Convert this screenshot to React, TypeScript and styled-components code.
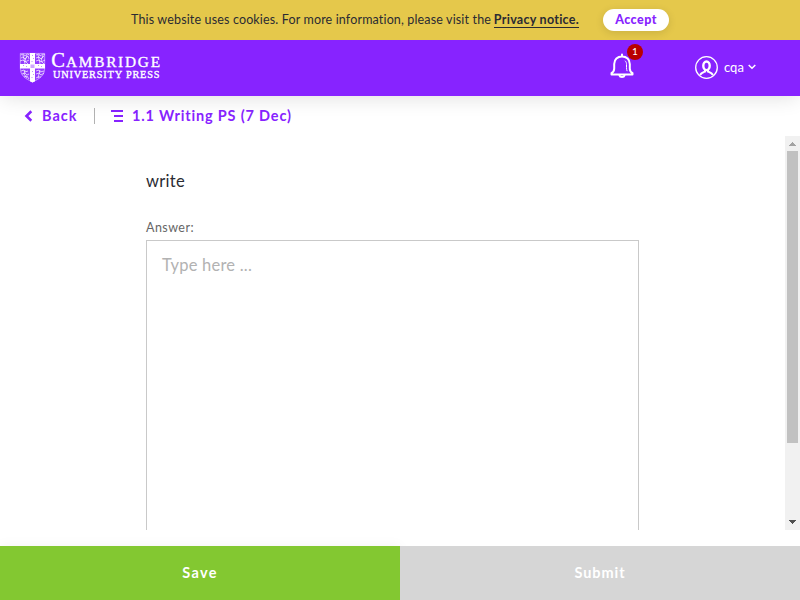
import React from "react";
import styled, { createGlobalStyle } from "styled-components";

const PURPLE = "#8723ff";

const GlobalStyle = createGlobalStyle`
  * { box-sizing: border-box; }
  html, body { margin: 0; padding: 0; }
  body {
    font-family: Lato, "Open Sans", sans-serif;
    color: #2b2b33;
    background: #fff;
    overflow: hidden;
  }
  button { font-family: inherit; border: 0; padding: 0; margin: 0; cursor: pointer; }
`;

const Page = styled.div`
  display: flex;
  flex-direction: column;
  width: 800px;
  height: 600px;
`;

const CookieBar = styled.div`
  flex: none;
  display: flex;
  align-items: center;
  justify-content: center;
  gap: 24px;
  height: 40px;
  background: #e5c84b;
  white-space: nowrap;
`;

const CookieText = styled.div`
  width: 448px;
  font-size: 12.5px;
  line-height: 18px;
  display: flex;
  justify-content: space-between;
`;

const CookieMessage = styled.span`
  letter-spacing: 0.15px;
`;

const NoticeLink = styled.a`
  height: 17px;
  line-height: 18px;
  font-weight: 700;
  letter-spacing: 0.27px;
  border-bottom: 1px solid #2b2b33;
`;

const AcceptButton = styled.button`
  width: 66px;
  height: 22px;
  border-radius: 11px;
  background: #fff;
  color: ${PURPLE};
  font-size: 12.5px;
  line-height: 20px;
  padding-bottom: 1px;
  font-weight: 900;
  letter-spacing: 0.45px;
  box-shadow: 0 2px 8px rgba(0, 0, 0, 0.12);
`;

const Header = styled.header`
  flex: none;
  display: flex;
  align-items: center;
  height: 56px;
  padding: 0 43px 0 20px;
  background: ${PURPLE};
  color: #fff;
  box-shadow: 0 4px 20px -2px rgba(0, 0, 0, 0.12);
  clip-path: inset(0 0 -30px 0);
`;

const Logo = styled.svg`
  display: block;
  overflow: visible;
  margin: -2px auto 0 0;
`;

const BellButton = styled.div`
  position: relative;
  width: 24px;
  height: 26px;
  margin: 0 61px 4px 0;
`;

const Badge = styled.span`
  position: absolute;
  left: 17px;
  top: -9px;
  width: 16px;
  height: 16px;
  border-radius: 50%;
  background: #b90000;
  font-size: 10px;
  line-height: 15px;
  text-align: center;
`;

const Account = styled.div`
  display: flex;
  align-items: center;
  width: 62px;
  height: 24px;
  margin-top: -2px;
`;

const AccountName = styled.span`
  width: 21px;
  margin: 0 3px 1px 6px;
  font-size: 13px;
  line-height: 20px;
`;

const Crumbs = styled.nav`
  flex: none;
  display: flex;
  align-items: center;
  height: 40px;
  padding-left: 24px;
  color: ${PURPLE};
  font-size: 14.5px;
  line-height: 20px;
  font-weight: 700;
  white-space: nowrap;
`;

const BackLabel = styled.span`
  width: 52px;
  margin-left: 9px;
  letter-spacing: 1px;
`;

const Divider = styled.span`
  width: 1px;
  height: 16px;
  margin-right: 16px;
  background: #b2b2b2;
`;

const LessonTitle = styled.span`
  margin-left: 8px;
  letter-spacing: 0.83px;
`;

const Body = styled.div`
  flex: none;
  display: flex;
  height: 394px;
  overflow: hidden;
`;

const Content = styled.main`
  flex: 1;
  padding: 32px 146px 0;
  overflow: hidden;
`;

const Prompt = styled.p`
  margin: 0;
  height: 48px;
  font-size: 16.5px;
  line-height: 26px;
  letter-spacing: 0.3px;
`;

const AnswerLabel = styled.label`
  display: block;
  height: 24px;
  color: #666;
  font-size: 12.5px;
  line-height: 24px;
  letter-spacing: 0.45px;
`;

const AnswerBox = styled.div`
  width: 493px;
  height: 400px;
  padding: 12px 15px;
  border: 1px solid #c9c9c9;
  color: #b2b2b2;
  font-size: 16.5px;
  line-height: 25px;
  letter-spacing: 0.22px;
`;

const Scrollbar = styled.div`
  display: flex;
  flex-direction: column;
  align-items: center;
  width: 15px;
  background: #f1f1f1;
`;

const ScrollThumb = styled.div`
  width: 11px;
  height: 292px;
  margin-bottom: auto;
  background: #c1c1c1;
`;

const Footer = styled.footer`
  display: flex;
  flex: none;
  height: 54px;
  margin-top: 16px;
`;

const ActionButton = styled.button<{ $tone: string; $spacing: string; $raised?: boolean }>`
  flex: 1;
  background: ${(p) => p.$tone};
  color: #fff;
  font-size: 14.5px;
  line-height: 20px;
  font-weight: 700;
  letter-spacing: ${(p) => p.$spacing};
  box-shadow: ${(p) => (p.$raised ? "0 0 12px rgba(0,0,0,0.05)" : "none")};
`;

function CambridgeLogo() {
  return (
    <Logo width="142" height="32" viewBox="0 0 142 32">
      <defs>
        <clipPath id="shield">
          <path d="M0 2H25V17C25 25 20 28 12.5 31.5C5 28 0 25 0 17Z" />
        </clipPath>
      </defs>
      <g clipPath="url(#shield)">
        <rect width="25" height="32" fill="#fff" fillOpacity="0.12" />
        <g stroke="#fff" strokeWidth="0.9" fill="none" strokeOpacity="0.75">
          <path d="M0.5 4l3-1 1 2 3-2 2 1M1 7l2-1 2 2 3-3 1 3M0 10l3-1 2 2 4-2M3 4l1 4 1 5M7 4l-2 6 3 3" />
          <path d="M16 4l3-1 1 2 3-2 2 1M16 7l3-1 2 2 3-3M16 10l3-1 2 2 4-2M18 4l1 4 1 5M23 4l-2 6 3 3" />
          <path d="M1 20l3-1 1 2 3-1M2 23l3-1 2 2 2-1M4 26l3-1 2 3M5 19l-1 4 3 4" />
          <path d="M16 20l3-1 1 2 4-1M16 23l3-1 2 2 3-2M16 27l2-1 3 0M20 19l-1 4-1 4" />
        </g>
        <path d="M10 2h5v11H25v4.500H15V32H10V17.500H0V13H10Z" fill="#fff" />
        <g fill={PURPLE} fillOpacity="0.5">
          <path d="M12 4h1v1h-1zM13 7h1v1h-1zM11.500 10h1v1h-1zM12 20h1v1h-1zM13 23h1v1h-1zM11.500 26h1v1h-1zM3 14h1v1H3zM6 15h1v1H6zM18 14h1v1h-1zM21 15h1v1h-1z" />
        </g>
        <rect x="10.500" y="13.500" width="4" height="3.500" fill={PURPLE} fillOpacity="0.4" />
      </g>
      <path d="M0.300 2.400H24.700V17C24.700 24.500 20 27.500 12.500 31C5 27.500 0.300 24.500 0.300 17Z" fill="none" stroke="#fff" strokeWidth="0.700" strokeOpacity="0.6" />
      <g fill="#fff" stroke="#fff" strokeWidth="0.350" fontFamily='"Liberation Serif", serif'>
        <text x="31.300" y="16" fontSize="20.500">C</text>
        <text x="46" y="15.500" fontSize="15.300" textLength="94" lengthAdjust="spacing">AMBRIDGE</text>
        <text x="33" y="26.500" fontSize="10.300" textLength="106.500" lengthAdjust="spacing">UNIVERSITY PRESS</text>
      </g>
    </Logo>
  );
}

function BellIcon() {
  return (
    <svg width="24" height="26" viewBox="0 0 24 26" fill="none" stroke="#fff" strokeWidth="2" strokeLinecap="round" strokeLinejoin="round">
      <path d="M12 1.500V3.500M1.500 21.500H22.500V20.200C20.500 19 19.800 18 19.800 15.500V11C19.800 6.500 16.500 3.500 12 3.500S4.200 6.500 4.200 11V15.500C4.200 18 3.500 19 1.500 20.200Z" />
      <path d="M9.500 22.500C10 24.600 14 24.600 14.500 22.500" />
      <path d="M15.300 8C16.300 9 16.500 10 16.500 11.500V14.500C16.500 16 16.700 17 17 17.800" strokeWidth="1" />
    </svg>
  );
}

function UserIcon() {
  return (
    <svg width="23" height="23" viewBox="0 0 23 23" fill="none" stroke="#fff">
      <circle cx="11.500" cy="11.500" r="10.800" strokeWidth="1.300" />
      <ellipse cx="11.500" cy="9.800" rx="3.200" ry="4.300" strokeWidth="2.400" />
      <path d="M10 13.500V15.500C8 16.300 6 17 5 19M13 13.500V15.500C15 16.300 17 17 18 19" strokeWidth="2.100" />
    </svg>
  );
}

export default function App() {
  return (
    <>
      <GlobalStyle />
      <Page>
        <CookieBar>
          <CookieText>
            <CookieMessage>This website uses cookies. For more information, please visit the</CookieMessage>
            <NoticeLink>Privacy notice.</NoticeLink>
          </CookieText>
          <AcceptButton>Accept</AcceptButton>
        </CookieBar>
        <Header>
          <CambridgeLogo />
          <BellButton>
            <BellIcon />
            <Badge>1</Badge>
          </BellButton>
          <Account>
            <UserIcon />
            <AccountName>cqa</AccountName>
            <svg width="8" height="6" viewBox="0 0 8 6" fill="none" stroke="#fff" strokeWidth="1.500">
              <path d="M0.700 1L4 4.300L7.300 1" />
            </svg>
          </Account>
        </Header>
        <Crumbs>
          <svg width="9" height="12" viewBox="0 0 9 12" fill="none" stroke={PURPLE} strokeWidth="2.600">
            <path d="M7.300 1.300L2.500 6L7.300 10.700" />
          </svg>
          <BackLabel>Back</BackLabel>
          <Divider />
          <svg width="13" height="12" viewBox="0 0 13 12" fill={PURPLE}>
            <path d="M0 0h12v2H0zM3 5h9v2H3zM3 10h9v2H3z" />
          </svg>
          <LessonTitle>1.1 Writing PS (7 Dec)</LessonTitle>
        </Crumbs>
        <Body>
          <Content>
            <Prompt>write</Prompt>
            <AnswerLabel>Answer:</AnswerLabel>
            <AnswerBox>Type here ...</AnswerBox>
          </Content>
          <Scrollbar>
            <svg width="15" height="15" viewBox="0 0 15 15" fill="#a3a3a3" shapeRendering="crispEdges">
              <path d="M7 6h1v1h1v1h1v1h1v1H4V9h1V8h1V7h1z" />
            </svg>
            <ScrollThumb />
            <svg width="15" height="15" viewBox="0 0 15 15" fill="#505050" shapeRendering="crispEdges">
              <path d="M4 5h7v1h-1v1H9v1H8v1H7V8H6V7H5V6H4z" />
            </svg>
          </Scrollbar>
        </Body>
        <Footer>
          <ActionButton $tone="#83c831" $spacing="1.3px" $raised>Save</ActionButton>
          <ActionButton $tone="#d6d6d6" $spacing="0.95px">Submit</ActionButton>
        </Footer>
      </Page>
    </>
  );
}
